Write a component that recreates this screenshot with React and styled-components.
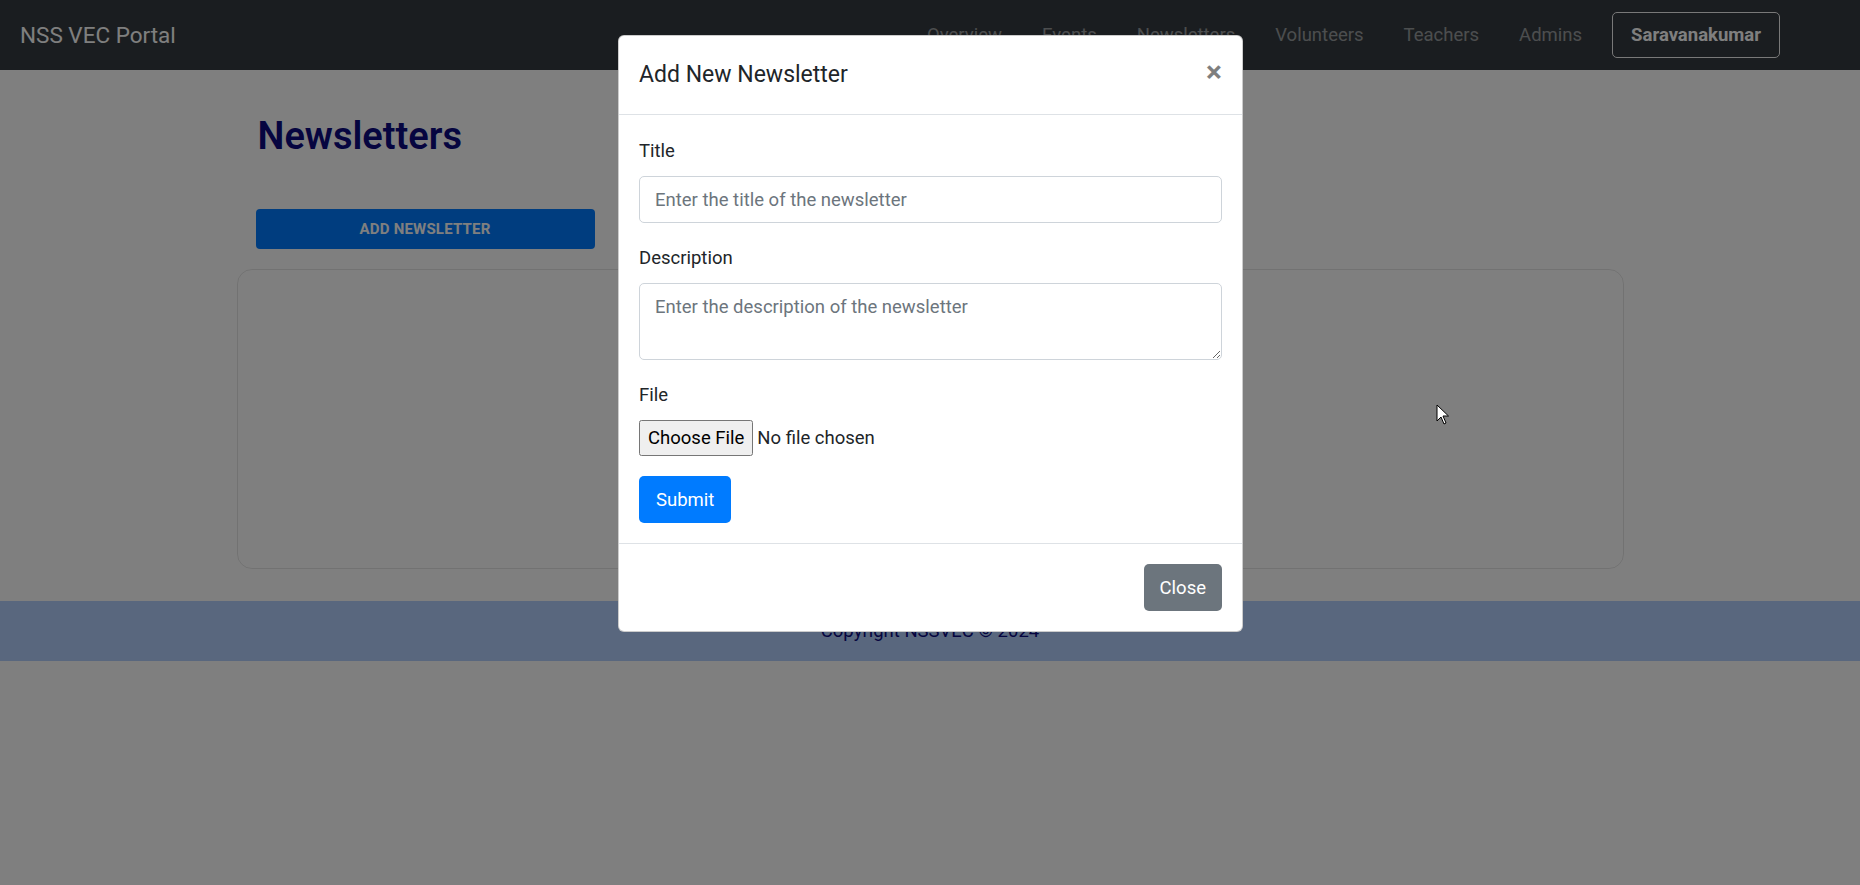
import React from 'react';
import styled, { createGlobalStyle } from 'styled-components';

const GlobalStyle = createGlobalStyle`
  * { box-sizing: border-box; }
  body {
    margin: 0;
    background: #ffffff;
    font-family: Roboto, "Noto Sans", Arial, sans-serif;
    color: #212529;
  }
`;

const Page = styled.div`
  position: relative;
  min-height: 885px;
  overflow: hidden;
`;

const Navbar = styled.nav`
  height: 70px;
  background: #343a40;
  display: flex;
  align-items: center;
  padding: 0 80px 0 20px;
`;

const Brand = styled.span`
  font-size: 22.5px;
  color: #ffffff;
`;

const NavLinks = styled.div`
  margin-left: auto;
  display: flex;
  align-items: center;
  gap: 40px;
`;

const NavLink = styled.a`
  font-size: 18.5px;
  color: rgba(255, 255, 255, 0.5);
  text-decoration: none;
`;

const UserButton = styled.button`
  margin-left: -10px;
  height: 46px;
  padding: 0 18px;
  background: transparent;
  border: 1px solid #f2f2f2;
  border-radius: 5px;
  color: #ffffff;
  font-family: inherit;
  font-size: 18.5px;
  font-weight: 700;
`;

const Container = styled.main`
  width: 1387px;
  margin: 0 auto;
`;

const Heading = styled.h2`
  margin: 42px 0 0 21px;
  font-size: 38px;
  line-height: 48px;
  font-weight: 600;
  color: #0c0a80;
`;

const AddButton = styled.button`
  display: block;
  margin: 49px 0 0 19px;
  width: 339px;
  height: 40px;
  border: none;
  border-radius: 4px;
  background: #007bff;
  color: #ffffff;
  font-family: inherit;
  font-size: 15px;
  font-weight: 700;
  letter-spacing: 0.2px;
`;

const Card = styled.section`
  margin-top: 20px;
  height: 300px;
  border: 1px solid rgba(0, 0, 0, 0.1);
  border-radius: 15px;
`;

const Footer = styled.footer`
  margin-top: 32px;
  height: 60px;
  background: #b2cffc;
  display: flex;
  align-items: center;
  justify-content: center;
  font-size: 18.5px;
  color: #0c0a80;
`;

const Backdrop = styled.div`
  position: absolute;
  inset: 0;
  background: rgba(0, 0, 0, 0.5);
`;

const Dialog = styled.div`
  position: absolute;
  top: 35px;
  left: 50%;
  width: 625px;
  margin-left: -312px;
  background: #ffffff;
  border: 1px solid rgba(0, 0, 0, 0.2);
  border-radius: 6px;
  display: flex;
  flex-direction: column;
`;

const DialogHeader = styled.div`
  display: flex;
  align-items: flex-start;
  justify-content: space-between;
  padding: 20px;
  border-bottom: 1px solid #dee2e6;
`;

const DialogTitle = styled.h5`
  margin: 0;
  font-size: 23px;
  line-height: 38px;
  font-weight: 400;
  color: #212529;
`;

const CloseX = styled.button`
  margin: 1px 0 0 0;
  padding: 0;
  background: transparent;
  border: none;
  font-family: inherit;
  font-size: 30px;
  font-weight: 700;
  line-height: 1;
  color: #000000;
  opacity: 0.5;
`;

const DialogBody = styled.form`
  padding: 21px 20px 20px;
`;

const FormGroup = styled.div`
  margin-bottom: 20px;
`;

const Label = styled.label`
  display: block;
  margin-bottom: 10px;
  font-size: 18.5px;
  line-height: 30px;
`;

const fieldStyles = `
  display: block;
  width: 100%;
  padding: 7.5px 15px;
  font-family: inherit;
  font-size: 18.5px;
  line-height: 30px;
  color: #495057;
  background: #ffffff;
  border: 1px solid #ced4da;
  border-radius: 5px;
  &::placeholder { color: #6c757d; }
`;

const Input = styled.input`
  ${fieldStyles}
  height: 47px;
`;

const TextArea = styled.textarea`
  ${fieldStyles}
  height: 77px;
  resize: vertical;
`;

const FileInput = styled.input`
  display: block;
  width: 100%;
  font-family: inherit;
  font-size: 18.5px;
  color: #212529;
  &::file-selector-button {
    font-family: inherit;
    font-size: 18.5px;
    height: 36px;
    padding: 0 7px;
    margin-right: 4px;
  }
`;

const ActionButton = styled.button`
  height: 47px;
  padding: 0 ${(p) => (p.$variant === 'secondary' ? '16px' : '17px')};
  border: none;
  border-radius: 5px;
  background: ${(p) => (p.$variant === 'secondary' ? '#6c757d' : '#007bff')};
  color: #ffffff;
  font-family: inherit;
  font-size: 18.5px;
`;

const DialogFooter = styled.div`
  display: flex;
  justify-content: flex-end;
  padding: 20px;
  border-top: 1px solid #dee2e6;
`;

const Cursor = styled.svg`
  position: absolute;
  left: 1436px;
  top: 404px;
`;

const links = ['Overview', 'Events', 'Newsletters', 'Volunteers', 'Teachers', 'Admins'];

export default function App() {
  return (
    <Page>
      <GlobalStyle />
      <Navbar>
        <Brand>NSS VEC Portal</Brand>
        <NavLinks>
          {links.map((l) => (
            <NavLink key={l} href="#">{l}</NavLink>
          ))}
          <UserButton>Saravanakumar</UserButton>
        </NavLinks>
      </Navbar>
      <Container>
        <Heading>Newsletters</Heading>
        <AddButton>ADD NEWSLETTER</AddButton>
        <Card />
      </Container>
      <Footer>Copyright NSSVEC © 2024</Footer>

      <Backdrop />
      <Dialog>
        <DialogHeader>
          <DialogTitle>Add New Newsletter</DialogTitle>
          <CloseX type="button">×</CloseX>
        </DialogHeader>
        <DialogBody onSubmit={(e) => e.preventDefault()}>
          <FormGroup>
            <Label>Title</Label>
            <Input placeholder="Enter the title of the newsletter" />
          </FormGroup>
          <FormGroup>
            <Label>Description</Label>
            <TextArea rows={2} placeholder="Enter the description of the newsletter" />
          </FormGroup>
          <FormGroup>
            <Label>File</Label>
            <FileInput type="file" />
          </FormGroup>
          <ActionButton type="submit">Submit</ActionButton>
        </DialogBody>
        <DialogFooter>
          <ActionButton type="button" $variant="secondary">Close</ActionButton>
        </DialogFooter>
      </Dialog>

      <Cursor width="14" height="22" viewBox="0 0 14 22">
        <path d="M1 1 L1 17 L5 13 L8 20 L10 19 L7 12 L12.5 12 Z" fill="#ffffff" stroke="#000000" strokeWidth="1" strokeLinejoin="round" />
      </Cursor>
    </Page>
  );
}
